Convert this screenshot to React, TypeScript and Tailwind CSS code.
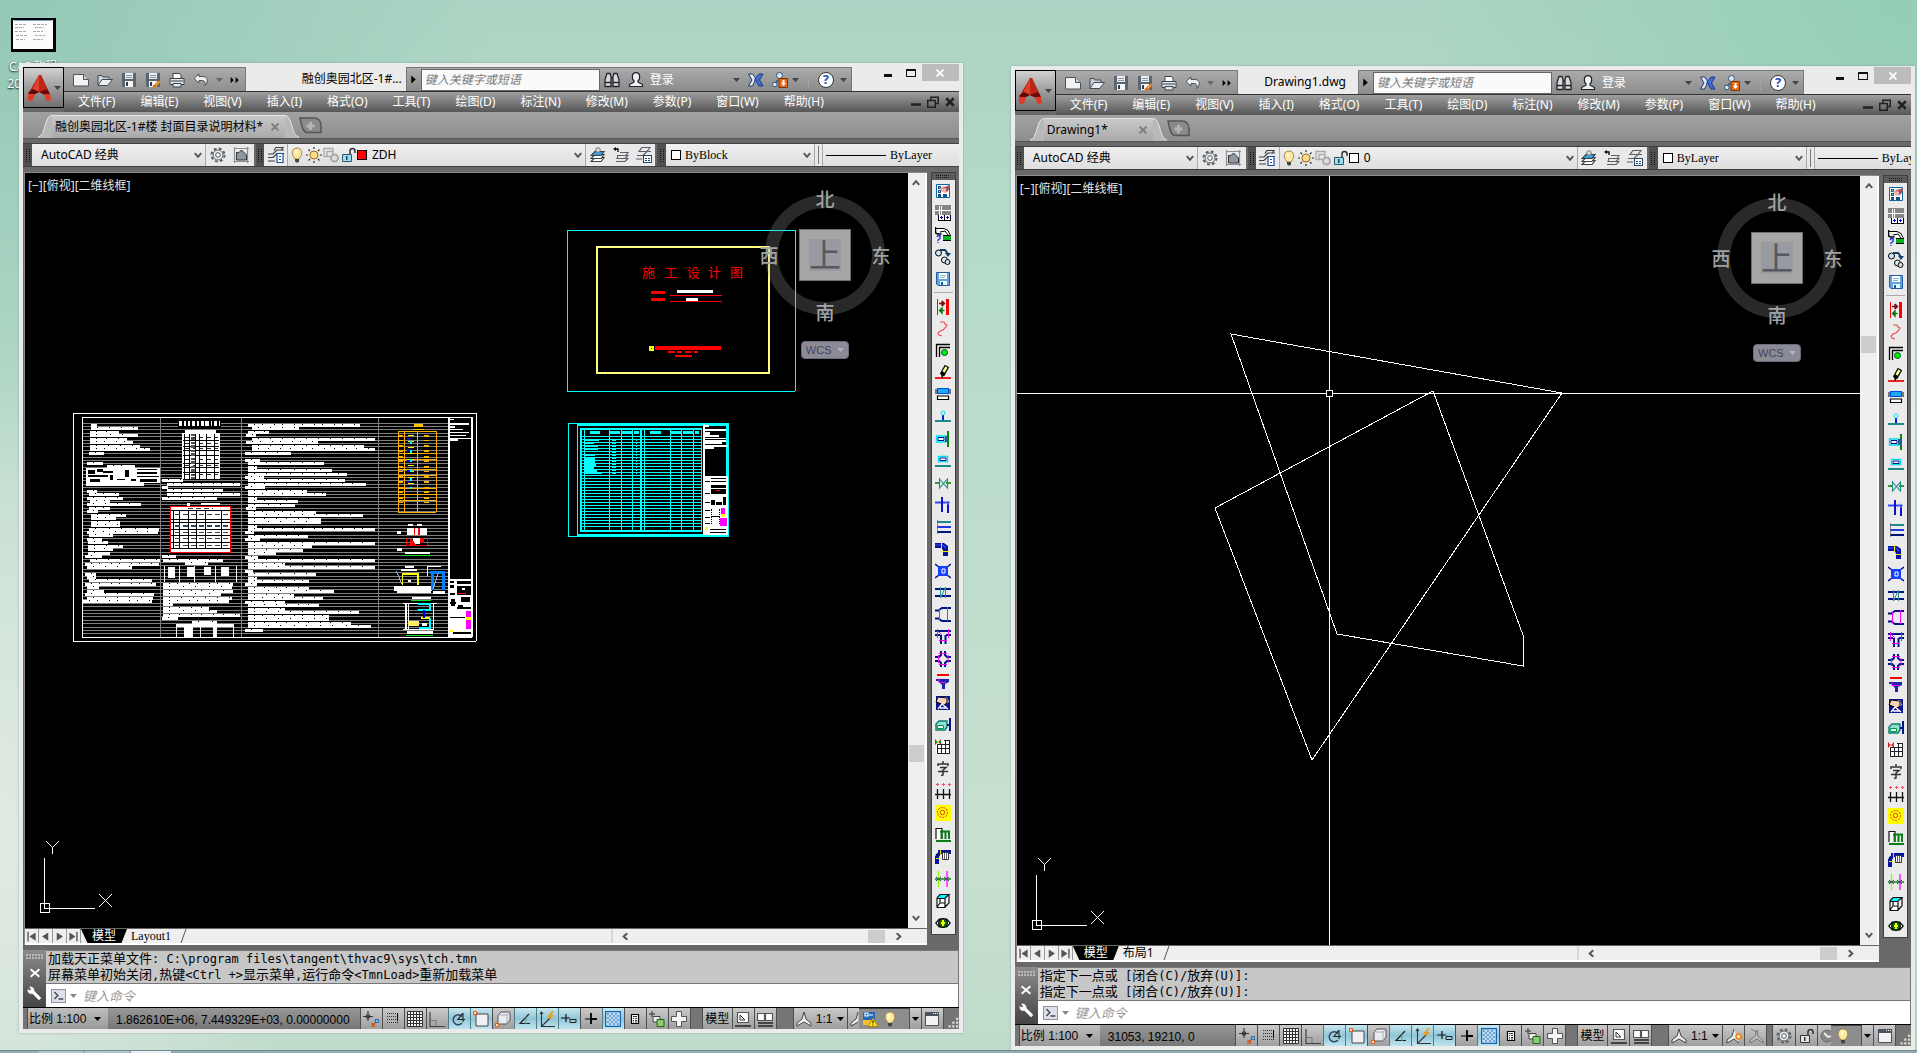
import React, { useState } from 'react';

const ui = "font-['Noto_Sans','Noto_Sans_CJK_SC',sans-serif]";
const song = "font-['Liberation_Serif','Noto_Sans_CJK_SC',serif]";
const plain = "font-['Liberation_Sans','Noto_Sans_CJK_SC',sans-serif]";

const menus = ['文件(F)', '编辑(E)', '视图(V)', '插入(I)', '格式(O)', '工具(T)', '绘图(D)', '标注(N)', '修改(M)', '参数(P)', '窗口(W)', '帮助(H)'];

// stroke / filled path shorthands for the pixel icons
const s = (d: string, c = '#000', w = 1, fill = 'none') => <path d={d} stroke={c} strokeWidth={w} fill={fill} />;
const f = (d: string, c = '#000') => <path d={d} fill={c} />;

const Ico: React.FC<{ size?: number; crisp?: boolean; children: React.ReactNode }> = ({ size = 16, crisp, children }) => (
  <svg width={size} height={size} viewBox="0 0 16 16" fill="none" className="shrink-0" shapeRendering={crisp ? 'crispEdges' : 'auto'} aria-hidden="true">
    {children}
  </svg>
);

const Down: React.FC<{ color?: string }> = ({ color = '#444' }) => (
  <svg width="7" height="4" viewBox="0 0 7 4" className="shrink-0" aria-hidden="true"><path d="M0 0h7L3.5 4z" fill={color} /></svg>
);

const Chevron = () => (
  <svg width="8" height="7" viewBox="0 0 8 7" className="pointer-events-none shrink-0" aria-hidden="true"><path d="M.8 1.2 4 4.8 7.2 1.2" stroke="#555" strokeWidth="2" fill="none" /></svg>
);

const Grip = () => (
  <svg width="4" height="13" viewBox="0 0 4 13" shapeRendering="crispEdges" aria-hidden="true"><path d="M.5 0v13M3.5 0v13" stroke="#111" strokeDasharray="1 1" /></svg>
);

const bulb = <>{s('M4.500 9.500C2.500 7.500 2.500 1 8 1s5.500 6.500 3.500 8.500L10 12H6z', '#a08850', 1, '#ffe9a0')}{f('M6 12h4v2.500L9 15.500H7L6 14z', '#444')}{f('M6 3h2v4H6z', '#fffbe0')}</>;
const gear = (
  <>
    <circle cx="8" cy="8" r="6.500" stroke="#5a6068" strokeWidth="2" strokeDasharray="2.800 2.300" />
    <circle cx="8" cy="8" r="5" stroke="#5a6068" fill="#eee" />
    <circle cx="8" cy="8" r="2.300" stroke="#4a5058" fill="#fff" />
  </>
);
const layers = (top: string) => (
  <>
    {s('M5 10.500h9l-3 4H1z', '#3b4046', 1.2, '#fff')}
    {s('M5 7.500h9l-3 4H1z', '#3b4046', 1.2, '#fff')}
    {s('M5 4.500h9l-3 4H1z', '#3b4046', 1.2, top)}
  </>
);
const lock = <>{s('M10 7V4a2.500 2.500 0 0 1 5 0v2', '#333', 1.5)}{s('M2.500 7.500h9v7h-9z', '#2b5968', 1, '#9bdcf0')}{f('M6 9h1.500v4H6z', '#174a5c')}</>;
const floppy = <>{f('M1 1h14v14H2L1 14z', '#5b6570')}{f('M4 1h8v6H4z', '#e9eef3')}{f('M5 3h6v1H5zM5 5h6v1H5z', '#8c96a0')}{f('M4 9h8v6H4z', '#f8f8f8')}{f('M5 10h2v4H5z', '#333d48')}</>;

const quick: { name: string; art: React.ReactNode }[] = [
  { name: '新建', art: <>{s('M.500 2.500h10l5 5v6.500H.500z', '#4b535d', 1, '#f2f3f5')}{s('M10.500 2.500v5h5', '#4b535d', 1, '#cfd4da')}</> },
  { name: '打开', art: <>{s('M1 13.500V3.500h4l1 1.500h6v3', '#414a55', 1, '#c9cfd6')}{s('M1 13.500 5 7.500h10.500l-5 6z', '#414a55', 1, '#eceff2')}</> },
  { name: '保存', art: floppy },
  { name: '另存为', art: <>{floppy}{s('M14.500 9.500 10 14l-2 1', '#d07818', 3)}{s('M14.500 9.500 11 13', '#ffc35a', 1)}</> },
  { name: '打印', art: <>{s('M4 6V1.500h6.500L12 3v3', '#3c434c', 1, '#fff')}{s('M1 6.500h14v6H1z', '#3c434c', 1, '#e3e5e8')}{f('M2 8h12v2H2z', '#8a929a')}{s('M4 11.500h8v3.500H4z', '#3c434c', 1, '#d8ecf0')}</> },
  { name: '放弃', art: s('M6 2 1 6.500 6 11V8.500h3.500c2 0 3 1.500 2.500 5 3.500-3.500 3-9-2-9H6z', '#4a525c', 1, '#f1f2f4') },
];

const railTop: React.ReactNode[] = [
  <>{s('M1.500 1.500h13v13h-13z', '#0a64a0', 1, '#fff')}{f('M3 3h3v3H3zM3 7h3v3H3zM3 11h3v3H3zM8 11h4v3H8z', '#14538a')}{f('M4 4h1v1H4zM4 8h1v1H4z', '#8ff')}{f('M5 6l3-3 4 1 2 3-3 3-4-1z', '#f3b0a0')}{f('M8 5l4-2 3-1v3l-3 4z', '#9b5660')}{f('M9 5l2 1-1 2z', '#fff')}</>,
  <>{f('M0 0h16v10H0z', '#858585')}{s('M4.500 1v9M6.500 1v9M0 5.500h16', '#fff')}{f('M3 10h13v6H3z', '#000')}{f('M4 10h5v5H4zM10 10h5v5h-5z', '#fff')}{s('M6.500 11v3M5 12.500h3M12.500 11v3M11 12.500h3', '#0000e0')}</>,
  <>{s('M0 1.500h9l4 2 2 4v3', '#000', 1, '#fff')}{s('M.500 0v6l2 1h4', '#000', 1.5)}{s('M5 5l5-1 3 4', '#000')}{f('M8 9h8v4H8z', '#08b020')}{s('M8 13.500h8M8 8.500h8', '#000')}{s('M2 10l1-1.500h2v3l-2 1.500v1M3 15v1', '#2430e0', 1.4)}</>,
  <>{s('M5 1h5l3 4', '#104070', 2)}{f('M10 4h6l-3 4z', '#104070')}<circle cx="3.500" cy="4" r="3" fill="#cfe6f5" stroke="#000" /><circle cx="9.500" cy="11" r="3" fill="#e4eef4" stroke="#000" /><circle cx="12.500" cy="13" r="2.500" fill="#cfe0ea" stroke="#000" /></>,
  <>{s('M1.500 1.500h13v13H3l-1.500-1.500z', '#235a9a', 1, '#62a3df')}{f('M4 2h8v6H4z', '#fff')}{f('M5 4h6v1H5zM5 6h5v1H5z', '#7bb')}{f('M5 10h7v4H5z', '#dff')}{f('M6 11h2v3H6z', '#235a9a')}</>,
];

const rail: React.ReactNode[] = [
  <>{f('M2 0h1v16H2zM11 0h3v16h-3z', '#f00')}{s('M4 4.500h5M7 2v5M7 2l2.500 2.500L7 7', '#7c1015', 1.4)}{s('M9.500 11.500H5M7 9v5l-2.500-2.500z', '#0a7a14', 1.4)}</>,
  <>{s('M5 1h4l1 2 2 1-1 2-3 3-3 1-2 2 1 2 3 1', '#f34747', 1.1)}</>,
  <>{s('M1.500 14V1.500H15', '#000', 1.3)}{s('M4.500 14V4.500H15', '#000', 1.3)}<circle cx="9.500" cy="9.500" r="3" fill="#0e0" stroke="#053" /></>,
  <>{f('M0 12h16v2H0z', '#f02020')}{s('M12 1 7 10', '#000', 5)}{s('M11.500 2 8.500 7', '#ffff90', 2.5)}{f('M6 9h3l-2 5z')}</>,
  <>{f('M0 2h16v5H0z', '#777')}{f('M2 1h12v6H2z', '#0050e0')}{f('M3 2h10v4H3z', '#20a8ff')}{s('M2.500 9v3.500h11V9z', '#000', 1.2, '#fff')}</>,
  <>{f('M0 11h16v2H0z', '#208a8a')}{f('M7 6h2v5H7z', '#0028d0')}<circle cx="8" cy="4" r="2" stroke="#0de" fill="#dff" /></>,
  <>{f('M12 0h2v16h-2z', '#088408')}{s('M1.500 5h9v6h-9z', '#00dcf0', 1.4, '#fff')}{s('M3 6.500h6v3H3z', '#00108c')}{f('M10 5h3v6h-3z', '#1c60a0')}</>,
  <>{f('M0 12h16v2H0z', '#208a8a')}{s('M3.500 3.500h9v5h-9z', '#00dcf0', 1.4, '#fff')}{s('M5 5h6v2.500H5z', '#00108c')}</>,
  <>{f('M0 7h5v2H0zM11 7h5v2h-5z', '#2f9a2f')}{s('M4.500 3v10l8-9v9l-8-9', '#1f8d8d', 1.1)}</>,
  <>{s('M0 5.500h14', '#3048ff', 2)}{s('M7 0v15M13 5v11', '#1010c8', 2)}<circle cx="13" cy="5.500" r="1.500" stroke="#889cff" /></>,
  <>{f('M2 2h14v2H2z', '#208a8a')}{f('M2 7h14v2H2z', '#2038e8')}{f('M2 12h14v2H2z', '#00107c')}{s('M2.500 1v14', '#667', 0.8)}</>,
  <>{f('M0 2h9l4 3v10H8V9L6 7H0z', '#0a10a0')}{s('M0 4h8l3 3', '#2a58ff', 1.2)}{f('M6 1h1v7H6zM7 10h7v1H7z', '#ee0')}</>,
  <>{s('M0 1l4 3M16 1l-4 3M0 15l4-3M16 15l-4-3', '#001488', 1.5)}{f('M3 3h10v10H3z', '#1540ff')}{s('M7 6h3v4H7z', '#fff', 1)}</>,
  <>{f('M0 3h16v2H0zM0 10h16v2H0z', '#001488')}{s('M5.500 2v11l5-11v11', '#1f9090', 1)}</>,
  <>{s('M0 3.500h4M0 11.500h4', '#001488', 2)}{s('M4 3 7 1h9M4 12l3 2h9', '#001488', 2)}{s('M4.500 2v11M12.500 0v14', '#f0f', 1)}</>,
  <>{f('M0 1h16v2H0zM0 5h5v2H0zM11 5h5v2h-5z', '#001488')}{s('M6 6v9M10.500 6v9', '#001488', 2)}{s('M2.500 0v9M13.500 0v9M4 11.500h8M4 3l3 3', '#f0f', 1)}</>,
  <>{s('M6 0v4L4 6H0M10 0v4l2 2h4M6 16v-4L4 10H0M10 16v-4l2-2h4', '#001488', 2)}{s('M4 2.500h8M4 13.500h8M3.500 4v8M13 4v8', '#f0f', 1)}</>,
  <>{f('M2 1h12v2H2z', '#f00')}{f('M1 6h13v3l-4 2v5H7v-4L3 8H1z', '#1c25a8')}{s('M4 5.500v4h7', '#f0f', 1)}</>,
  <>{f('M1 1h14v14H1z', '#0a1590')}{f('M2 2h10l2 5-5 3-7-3z', '#f2d2b8')}{s('M1 7l8 3 3-2V3L3 2z', '#000', 1)}{s('M3 14l4-5 6 5M5 13h7', '#fff', 1.3)}</>,
  <>{s('M1 7l3-3h8v6l-2 3H1z', '#117c70', 1.4, '#8de0d0')}{s('M2.500 8.500h6v3h-6z', '#094', 1, '#fff')}{s('M12 8h3M15 1v13', '#001488', 2)}</>,
  <>{f('M1 1h14v14H1z', '#fff')}{s('M2 5.500h13M2 9.500h13M2 14.500h13M2.500 5v10M6.500 5v10M10.500 1v14M14.500 1v14M9 1.500h6', '#222', 1)}{f('M0 0l3 3 3-3v6L3 3 0 6z', '#d02020')}{f('M1 2h1v2H1zM5 2h1v2H5z', '#0c0')}</>,
  <>{s('M8 0v3M3 5V3h10v2M5 6.500h6L8 9v5l-2 .500M3 10.500h10', '#333', 1.5)}</>,
  <>{s('M0 11.500h16M2.500 6v10M8.500 6v10M14.500 6v10', '#111', 1.3)}{s('M1 1.500h3M7 1.500h3M13 1.500h3M2.500 0v3M8.500 0v3M14.500 0v3', '#f45', 1)}</>,
  <>{f('M0 0h16v16H0z', '#ff0')}<circle cx="7.500" cy="7.500" r="5" stroke="#f03010" strokeDasharray="2 1" /><circle cx="7.500" cy="7.500" r="2.200" stroke="#f03010" /></>,
  <>{s('M1 12V1.500h6V12', '#111', 1.2, '#fff')}{s('M1 14h15M5 4.500h10M6.500 4v8M10.500 4v8M14 4v8', '#0a7c18', 2)}</>,
  <>{f('M0 9h3l3-4h8V2H6L1 5z', '#001488')}{f('M0 7h4v8H0zM3 1h13v4H3z', '#0a12a0')}{s('M7.500 3.500h6v7h-6z', '#333', 1, '#fff')}{s('M9.500 4v6M11.500 4v6', '#666', 1)}{f('M1 9h4v1H1zM5 1h1v5H5z', '#dd0')}</>,
  <>{s('M0 8h16', '#4c9a50', 2)}{s('M3.500 0v16', '#8f0', 1.3)}{s('M12 0v16', '#f0f', 1.3)}{s('M1 6l5 4M1 10l5-4M9 6l5 4M9 10l5-4', '#346', 1)}</>,
  <>{f('M2 5h9v10H2z', '#fff')}{f('M5 2h8l-3 3H3z', '#0ff')}{s('M2 5.500h8v9H2zM2 5l3-3.500h9L10 5M14 2v8l-4 4M2 14l3-4h5M5 10V6', '#111', 1.2)}</>,
  <>{f('M0 8 4 3.500h8L16 8l-4 4.500H4z')}{f('M1.500 8 4 5.500v5zM14.500 8 12 5.500v5z', '#fff')}<circle cx="8" cy="8" r="4.500" fill="#0a6a14" stroke="#000" />{f('M7 5h2v6H7zM6 7h4v2H6z', '#ff0')}</>,
];

interface Toggle { name: string; on?: boolean; art: React.ReactNode }

const toggles: Toggle[] = [
  { name: '推断约束', art: <>{s('M0 5.500h10M5 0v10', '#333', 1.1)}{s('M3.500 4h3v3h-3z', '#333', 1)}{s('M12.500 8.500h3v3h-3zM12 12l-2 2', '#2f72b8', 1.2)}{s('M9 12.500h2.500v3H9z', '#d25c20', 1.2)}</> },
  { name: '捕捉', art: <>{s('M2 2.500h9M2 5.500h9M2 8.500h9M2 11.500h9', '#333', 1)}{s('M3.500 2v11M5.500 2v11M7.500 2v11M9.500 2v11', '#b4b4b4', 1)}{f('M12 2h1v8h-1zM12 11h1v1h-1z')}</> },
  { name: '栅格', art: <>{f('M1 1h15v15H1z', '#f4f4f4')}{s('M.500 .500h15v15H.500zM3.500 0v16M6.500 0v16M9.500 0v16M12.500 0v16M0 3.500h16M0 6.500h16M0 9.500h16M0 12.500h16', '#333', 1)}</> },
  { name: '正交', art: <>{s('M1 1v14.500h15', '#444', 1.2)}{s('M1 9.500h6V15', '#777', 1)}</> },
  { name: '极轴', on: true, art: <>{s('M11 5.500A5 5 0 1 0 11 12', '#346', 1.4)}{s('M12 2 7 8.500h7M12 2v9', '#222', 1.1)}</> },
  { name: '对象捕捉', on: true, art: <>{s('M3 3h12v12H3z', '#444', 1, '#eef0f4')}<circle cx="2" cy="2" r="1.700" stroke="#e85a18" strokeWidth="1.200" fill="#fff" /></> },
  { name: '三维捕捉', art: <>{s('M3 4 6 1h9v8l-3 4H3z', '#555', 1, '#e8ebf0')}{s('M3 4h9v9M12 4l3-3', '#aab', 1)}<circle cx="2" cy="14" r="1.700" stroke="#e85a18" strokeWidth="1.200" fill="#fff" /></> },
  { name: '对象追踪', on: true, art: <>{s('M12 3 3 12.500h10', '#222', 1.2)}{s('M9 6v7', '#699', 1)}</> },
  { name: '动态坐标', on: true, art: <>{s('M2.500 1v14.500H16M1 3l1.500-2L4 3M3 15 11 7', '#333', 1.1)}{f('M13 0 8 6h3l-1 4 5-6h-3l3-4z', '#f49a18')}</> },
  { name: '动态输入', on: true, art: <>{s('M0 7h9M5 3v8', '#111', 1.2)}{s('M9 8.500h6v3H9z', '#222', 1)}</> },
  { name: '线宽', art: <>{s('M2 8h12', '#000', 1)}{s('M8 2v11M8 8h6', '#000', 1.8)}</> },
  {
    name: '透明度',
    on: true,
    art: (
      <>
        {s('M.500 .500h15v15H.500z', '#1463b8', 1.4, '#c4dcf0')}
        <path d="M2 3h12M2 7h12M2 11h12" stroke="#6fa5d4" strokeWidth="2" strokeDasharray="2 2" />
        <path d="M4 5h10M4 9h10M4 13h10" stroke="#6fa5d4" strokeWidth="2" strokeDasharray="2 2" />
      </>
    ),
  },
  { name: '快捷特性', art: <>{s('M4.500 3.500h7v9h-7z', '#000', 1.2, '#fff')}{s('M6 5.500h4M6 7.500h1M8 7.500h2M6 9.500h1M8 9.500h2M6 11h1M8 11h2', '#000', 0.8)}</> },
  { name: '选择循环', art: <>{s('M0 3h6M3 0v6', '#333', 1)}{s('M4 5.500h7V11H4z', '#444', 1, '#eee')}{s('M8 8.500h7v7H8z', '#226618', 1, '#8ccc70')}</> },
  { name: '注释监视器', art: s('M5.500 .500h5v5h5v5h-5v5h-5v-5h-5v-5h5z', '#555', 1, '#f2f4f6') },
];

const statusTone = 'border-l border-[#4f4f4f] bg-linear-to-b from-[#c9c9c9] to-[#9f9f9f]';
const activeTone = 'border-l border-[#4f7c88] bg-linear-to-b from-[#c9e8ef] via-[#8fc6d8] to-[#bfe5ee]';

// Full notes sheet: bars of body copy as [x, y, width]
const notesA = [
  [93, 72, 19], [93, 82, 142], [90, 93, 88], [90, 103, 143], [90, 113, 110], [90, 124, 128], [90, 134, 150], [90, 144, 180], [87, 155, 45],
  [80, 186, 48], [140, 196, 85], [80, 270, 32], [87, 280, 90], [80, 290, 108], [90, 300, 60], [80, 310, 163], [87, 320, 63], [80, 330, 34],
  [93, 342, 105], [93, 352, 75], [93, 362, 87], [93, 372, 87], [87, 383, 209], [80, 393, 213], [87, 403, 73], [80, 414, 45], [85, 424, 58],
  [85, 434, 103], [85, 445, 75], [85, 455, 65], [75, 465, 50], [90, 478, 210], [75, 488, 223], [80, 498, 135], [75, 519, 33], [80, 529, 28],
  [87, 538, 188], [75, 548, 212], [80, 559, 38], [80, 569, 52], [75, 579, 208], [80, 590, 200], [70, 600, 205],
];
const notesB = [
  [306, 238, 62], [320, 248, 220], [306, 258, 19], [320, 268, 168], [320, 280, 220], [306, 290, 164], [306, 465, 42], [308, 476, 182],
  [375, 487, 70], [308, 548, 211], [308, 559, 207], [308, 569, 211], [308, 579, 176], [308, 590, 209], [308, 600, 199], [308, 610, 32],
  [308, 621, 140], [308, 631, 162], [308, 641, 232], [306, 652, 49], [395, 663, 75],
];
const notesC = [
  [563, 900], [575, 718], [563, 626], [557, 588], [575, 945], [557, 773], [575, 912], [575, 945], [555, 692], [0, 0],
  [555, 600], [563, 792], [563, 592], [563, 815], [563, 860], [555, 612], [563, 855], [563, 918], [555, 616], [563, 740],
  [563, 798], [563, 590], [563, 714], [563, 706], [557, 588], [563, 768], [563, 908], [563, 782], [563, 782], [563, 590],
  [563, 945], [555, 582], [563, 744], [555, 600], [563, 945], [563, 755], [563, 730], [563, 648], [555, 594], [563, 945],
  [563, 674], [563, 945], [555, 580], [563, 767], [563, 590], [563, 747], [555, 590], [563, 747], [563, 822], [563, 703],
  [563, 790], [555, 675], [563, 776], [563, 676], [563, 897], [563, 808], [563, 808], [563, 873], [563, 933], [555, 608],
];

const bar = (x: number, y: number, w: number, key: string) => (
  <g key={key}>
    <rect x={x} y={y} width={w} height="9" fill="#fff" />
    <path d={`M${x + 18} ${y + 1.5}h${Math.max(w - 24, 0)}`} stroke="#000" strokeWidth="3" strokeDasharray={`3 ${21 + (y % 4) * 6} 3 33`} />
  </g>
);

const NotesSheet = () => (
  <g transform="translate(35 227) scale(0.33333)">
    {Array.from({ length: 63 }, (_, i) => (
      <path key={i} d={`M68 ${Math.round(70 + i * 10.2)}h1097`} stroke="#808080" strokeWidth="3" />
    ))}
    <path d="M301 52v660M544 52v660M955 52v660" stroke="#808080" strokeWidth="3" />
    <path d="M40.500 40.500h1209v684H40.500z" stroke="#fff" strokeWidth="3" fill="none" />
    {notesA.map(([x, y, w]) => bar(x, y, w, `a${y}`))}
    {notesB.map(([x, y, w]) => bar(x, y, w, `b${y}`))}
    {notesC.map(([a, b], i) => (b ? bar(a, Math.round(72 + i * 10.4), b - a, `c${i}`) : null))}
    <path d="M78 205h222v44h-48v9H78z" fill="#fff" />
    <path d="M84 210h20v12H84zM112 207h16v9h-16zM130 214h28v6h-28zM84 226h60v6H84zM90 236h30v9H90zM150 226h8v15h-8zM196 210h12v21h-12zM232 207h60v3h-60zM232 216h60v5h-60zM170 236h26v4h-26zM232 228h64v3h-64zM214 236h14v8h-14zM240 237h50v8h-50z" fill="#000" />
    <path d="M354 60h128v22H354z" fill="#000" />
    <path d="M356 71h124" stroke="#fff" strokeWidth="15" strokeDasharray="10 6 5 6 8 5" />
    <path d="M375 90h93v9h12v138H366V99h9z" fill="#fff" />
    <path d="M373 102v134M390 102v134M406 102v134M420 102v134M441 102v134M463 102v134M369 123h108M369 141h108M369 153h108M369 168h108M369 192h108M369 204h108M369 219h108" stroke="#000" strokeWidth="3" />
    <path d="M399 102v134" stroke="#555" strokeWidth="10" strokeDasharray="6 4 9 5" />
    <path d="M376 132h98M376 147h98M376 180h98M376 198h98M376 225h98M376 112h98" stroke="#322" strokeWidth="3" strokeDasharray="10 12" />
    <path d="M381 309h9v9h-9zM424 309h56v6h-56z" fill="#fff" />
    <path d="M332 319h180v139H332z" fill="#fff" stroke="#f00" strokeWidth="3" />
    <path d="M340 331v117M358 331v117M385 331v117M409 331v117M436 331v117M484 331v117M333 331h177M333 358h177M333 367h177M333 388h177M333 406h177M333 427h177M333 447h177" stroke="#000" strokeWidth="3" fill="none" />
    <path d="M385 325h75M345 343h160M345 378h160M345 397h160M345 416h160M345 436h160" stroke="#345" strokeWidth="4" strokeDasharray="14 10" />
    <path d="M313 498v47M358 498v47M405 498v47M466 498v47M529 498v47M350 672v40M421 672v40M520 672v40" stroke="#fff" strokeWidth="3" />
    <path d="M324 500h21v33h-21zM381 500h22v32h-22zM432 500h20v24h-20zM484 500h24v27h-24zM350 673h170v8H350zM372 681h27v31h-27zM460 681h10v31h-10z" fill="#fff" />
    <path d="M67.500 52.500h1170v660H67.500z" stroke="#fff" strokeWidth="3" fill="none" />
    <path d="M1165 52h6v660h-6zM1234 52h5v660h-5z" fill="#fff" />
    <path d="M1171 57h10v4h-10zM1171 69h56v5h-56zM1171 78h14v5h-14zM1171 87h38v4h-38zM1171 95h56v3h-56zM1171 105h48v4h-48zM1171 114h64v3h-64zM1171 117h23v6h-23z" fill="#fff" />
    <path d="M1062 71h27v10h-27zM1058 86h34v5h-34z" fill="#ffc000" />
    <path d="M1015.500 94.500h114v243h-114zM1034 94v243M1073 94v243M1015 160h114M1015 178h114M1015 210h114M1015 228h114M1015 265h114M1015 283h114M1015 301h114" stroke="#ffb000" strokeWidth="3" fill="none" />
    <path d="M1099 105v215M1022 105v215" stroke="#ffb000" strokeWidth="14" strokeDasharray="6 8 5 12" />
    <path d="M1052 105v160" stroke="#ff0" strokeWidth="18" strokeDasharray="4 14" />
    <path d="M1052 122v145" stroke="#0ff" strokeWidth="6" strokeDasharray="9 19" />
    <path d="M1047 115v150" stroke="#00f" strokeWidth="9" strokeDasharray="6 26" />
    <path d="M1044 372h14v6h-14zM1071 372h16v6h-16zM1040 384h60v22h-60zM1010 393h14v9h-14zM1010 444h16v9h-16zM1034 457h76v6h-76zM1060 415h20v18h-20z" fill="#fff" />
    <path d="M1062 384h4v20h-4zM1074 384h6v20h-6zM1038 414h4v22h-4zM1052 414l18 22h-22zM1080 414h12v16h-12zM1100 414h3v22h-3zM1038 435h64v3h-64z" fill="#f00" />
    <path d="M1032 466h81M1053 601h60M1038 706h81" stroke="#10e020" strokeWidth="3" />
    <path d="M1034 498h28v6h-28zM1024 507h46v6h-46zM1002 558h115v14h-115zM1012 573h100v5h-100zM1055 591h58v6h-58zM1118 573h36v9h-36zM1044 540h9v6h-9zM1102 498h3v30h-3zM1102 498h40v3h-40z" fill="#fff" />
    <path d="M1028 556v-33h46v33M1083 655h26" stroke="#ff0" strokeWidth="5" fill="none" />
    <path d="M1110 517h46M1150 517v54M1118 520v50" stroke="#0080ff" strokeWidth="8" fill="none" />
    <path d="M1008 512l18 40M1135 520l-16 46" stroke="#8ab8ff" strokeWidth="3" />
    <path d="M1030 609h100v4h-100zM1035 613h5v73h-5zM1045 613h3v73h-3zM1120 613h3v73h-3zM1040 694h78v9h-78zM1030 686h92v4h-92zM1085 670h16v9h-16z" fill="#fff" />
    <path d="M1075 612h36v19h-36M1111 655v30h-34" stroke="#0ff" strokeWidth="6" fill="none" />
    <path d="M1092 630v25" stroke="#00f" strokeWidth="4" />
    <path d="M1045 662h33v15h-33z" fill="#fe6" />
    <path d="M1171 537h63v175h-63z" fill="#fff" />
    <path d="M1190 543h44v10h-44zM1192 557h42v28h-42zM1171 543h12v5h-12zM1171 555h12v9h-12zM1171 580h14v6h-14zM1204 592h26v14h-26zM1174 598h12v20h-12zM1171 606h16v6h-16zM1194 614h14v10h-14zM1190 622h44v5h-44zM1171 652h45v3h-45zM1180 696h54v6h-54z" fill="#000" />
    <path d="M1206 564h9v6h-9z" fill="#fff" />
    <path d="M1194 580h25" stroke="#f00" strokeWidth="3" />
    <path d="M1218 633h15v18h-15zM1218 661h15v27h-15z" fill="#f0f" />
    <path d="M1218 652h15v8h-15zM1170 689h9v7h-9z" fill="#ff0" />
  </g>
);

const CoverSheet = () => (
  <g transform="translate(525 7) scale(0.33333)">
    <path d="M52.500 151.500h684v483h-684z" stroke="#0ff" strokeWidth="3" fill="none" />
    <path d="M141 201h516v378H141z" stroke="#ffff80" strokeWidth="6" fill="none" />
    <text x="276 343 410 473 540" y="291" fontSize="39" fill="#f00" fontFamily="'Noto Sans CJK SC', sans-serif">施工设计图</text>
    <path d="M303 333h42v9h-42zM303 354h42v9h-42zM360 345h156v3H360zM360 363h156v3H360zM315 498h198v12H315zM354 513h21v6h-21zM381 513h15v6h-15zM405 513h18v6h-18zM432 513h12v6h-12zM375 525h51v6h-51z" fill="#f00" />
    <path d="M381 330h108v9H381zM408 354h36v9h-36z" fill="#fff" />
    <path d="M297 498h15v15h-15z" fill="#ff0" />
    <path d="M303 504h4v4h-4z" fill="#f00" />
  </g>
);

const ListSheet = () => (
  <g transform="translate(525 7) scale(0.33333)">
    <path d="M55.500 730.500h480v339h-480zM82.500 730v339" stroke="#0ff" strokeWidth="3" fill="none" />
    <path d="M84 732h453v6H84zM84 1062h453v8H84zM528 732h9v336h-9zM90 744h366v6H90zM90 1050h366v6H90zM90 744h6v310h-6zM269 744h7v310h-7z" fill="#0ff" />
    <path d="M103 750v300M178 750v300M214 750v300M247 750v300M284 750v300M361 750v300M394 750v300M430 750v300M455 744v310" stroke="#0ff" strokeWidth="3" />
    {Array.from({ length: 31 }, (_, i) => (
      <path key={i} d={`M96 ${770 + i * 9}h360`} stroke="#0ff" strokeWidth="3" />
    ))}
    <path d="M120 753h30v9h-30zM180 753h30v9h-30zM217 753h29v9h-29zM252 753h15v9h-15zM300 753h33v9h-33zM363 753h30v9h-30zM399 753h30v9h-30zM435 753h12v9h-12zM102 778h45v5h-45zM102 787h30v5h-30zM102 796h42v5h-42zM102 805h42v5h-42zM102 823h33v5h-33zM102 832h33v18h-33zM102 850h36v9h-36zM102 859h30v9h-30zM102 868h39v9h-39zM102 877h54v6h-54z" fill="#0ff" />
    <path d="M192 778v105" stroke="#0ff" strokeWidth="12" strokeDasharray="5 4" />
    <path d="M260 778v105" stroke="#0ff" strokeWidth="3" strokeDasharray="5 4" />
    <path d="M459 732h6v333h-6zM465 735h12v6h-12zM465 747h63v5h-63zM465 756h16v9h-16zM465 765h42v6h-42zM465 774h63v3h-63zM465 780h63v5h-63zM465 786h51v6h-51zM465 795h69v6h-69zM465 801h27v6h-27zM465 888h69v177h-69z" fill="#fff" />
    <path d="M483 894h45v3h-45zM483 903h45v3h-45zM483 916h45v8h-45zM483 927h45v15h-45zM483 960h12v14h-12zM498 966h18v9h-18zM519 950h9v24h-9zM465 903h15v3h-15zM465 939h15v3h-15zM465 966h15v3h-15zM465 990h14v3h-14zM465 1011h14v3h-14zM465 1029h14v3h-14zM480 1047h48v3h-48zM480 1056h48v3h-48z" fill="#000" />
    <path d="M484 988v44M508 988v44" stroke="#000" strokeWidth="3" strokeDasharray="4 3" />
    <path d="M484 1010h24" stroke="#000" strokeWidth="3" />
    <path d="M498 930h12v3h-12z" fill="#f00" />
    <path d="M513 984h12v18h-12zM510 1014h21v24h-21z" fill="#f0f" />
    <path d="M513 1002h12v9h-12zM465 1041h9v8h-9z" fill="#ff0" />
  </g>
);

const PolyDrawing = () => (
  <g stroke="#fff" fill="none">
    <path d="M214 158 545 217 295 584 198 332 416 215 506 459V490L320 458Z" />
    <path d="M312.500 0V2000M0 217.500H3000" />
    <path d="M309.500 214.500h6v6h-6z" fill="#000" />
  </g>
);

const ViewCube = () => (
  <div className="absolute top-3.5 right-4 flex w-[134px] flex-col items-center">
    <svg width="134" height="140" viewBox="-4 -6 134 140" className="overflow-visible" aria-label="ViewCube">
      <circle cx="63" cy="62" r="53.500" fill="none" stroke="#a0a0a0" strokeOpacity="0.260" strokeWidth="13" />
      <rect x="37.500" y="36.500" width="51" height="51" fill="#a6a6a6" stroke="#6f6f6f" />
      <rect x="47" y="46" width="32" height="32" fill="#989a9f" />
      <g fontFamily="'Noto Sans CJK SC', sans-serif" fontSize="19" fontWeight="500" textAnchor="middle" fill="#a2a2a2">
        <text x="63" y="14">北</text>
        <text x="63" y="127">南</text>
        <text x="7" y="70">西</text>
        <text x="119" y="70">东</text>
        <text x="63" y="74" fontSize="32" fontWeight="400" fill="#55595f">上</text>
      </g>
    </svg>
    <button className="mt-3.5 flex h-[18px] w-12 items-center justify-between rounded-[4px] border border-[#6c6c7a] bg-[#8b8b98] px-1 text-[11px] text-[#454552] font-['Liberation_Sans',sans-serif]">
      WCS <Down color="#b2b2bd" />
    </button>
  </div>
);

const UcsIcon = () => (
  <svg width="100" height="96" viewBox="0 0 100 96" className="absolute bottom-0 left-0" stroke="#fff" fill="none" aria-hidden="true">
    <path d="M19.500 26v50H70M15.500 71.500h9v9h-9z" shapeRendering="crispEdges" />
    <path d="M21 9l6.500 6.500L34 9M27.500 15.500V22M74 62l13 13M87 62 74 75" />
  </svg>
);

const CommandText: React.FC<{ line: string }> = ({ line }) => (
  <p>
    {line.split(/([\x20-\x7e]+)/).map((part, i) => (
      <span key={i} className={i % 2 ? "text-[12px] font-['DejaVu_Sans_Mono',monospace]" : ''}>{part}</span>
    ))}
  </p>
);

interface CadProps {
  className: string;
  title: string;
  titlePad: string;
  tab: string;
  layer: string;
  layerFill: string;
  color: string;
  layout: string;
  history: string[];
  coords: string;
  thumb: string;
  tray: 'short' | 'long';
  children: React.ReactNode;
}

const CadWindow: React.FC<CadProps> = (p) => {
  const [command, setCommand] = useState('');
  const [modes, setModes] = useState(toggles.map((t) => !!t.on));

  return (
    <section aria-label={p.title} className={`relative flex min-w-0 flex-col overflow-hidden bg-[#ebebeb] p-1 shadow-[0_0_2px_rgba(90,120,110,0.5)] ${ui} ${p.className}`}>
      <div className="flex min-h-0 flex-1 flex-col bg-[#696969]">
        <header className="flex h-[45px] shrink-0">
          <button aria-label="应用程序菜单" className="flex h-[41px] w-[41px] shrink-0 items-center justify-center gap-0.5 border border-black bg-linear-to-b from-[#d0d0d0] to-[#707070]">
            <svg width="25" height="28" viewBox="0 0 25 28" aria-hidden="true">
              <path d="M12 1 1 20l5 1 6-3 6 3 5-1L14 1z" fill="#b01c12" />
              <path d="M12 1 5 16l7 2 8-3z" fill="#e0402a" />
              <path d="M12 1v17l8-3L14 1z" fill="#bc2618" />
              <path d="M1 19l5-4 6 3-6 3z" fill="#5a0a08" />
              <path d="M12 18l8-3 3 5-5 1z" fill="#6b0c0a" />
              <path d="M1 20h7l-2 6c-3 2-6 1-5-2zM17 20h6l1 5c-1 3-4 2-5 1z" fill="#e03a26" />
            </svg>
            <Down color="#3c4652" />
          </button>
          <div className="flex min-w-0 flex-1 flex-col">
            <div className="flex h-6 shrink-0 bg-[#ebebeb]">
              <div className="flex w-[182px] shrink-0 items-center border-t border-r border-[#777] bg-linear-to-b from-[#ababab] to-[#8f8f8f] pl-[5px]">
                {quick.map((q) => (
                  <button key={q.name} aria-label={q.name} className="flex w-6 justify-center"><Ico>{q.art}</Ico></button>
                ))}
                <button aria-label="放弃列表" className="flex w-3 justify-center"><Down color="#666" /></button>
                <button aria-label="更多" className="flex w-5 justify-center"><Ico size={10}>{f('M1 3l5 5-5 5zM9 3l5 5-5 5z')}</Ico></button>
              </div>
              <h1 className={`flex min-w-0 flex-1 items-center justify-end text-[12px] whitespace-nowrap text-black ${p.titlePad}`}>{p.title}</h1>
              <div className="flex shrink-0 items-center border border-b-0 border-[#777] bg-linear-to-b from-[#ababab] to-[#8b8b8b]">
                <button aria-label="收起搜索" className="flex w-3.5 justify-center"><Ico size={9}>{f('M4 1l8 7-8 7z')}</Ico></button>
                <input aria-label="搜索" placeholder="键入关键字或短语" className="h-[22px] w-[179px] border border-[#666] bg-[#fafafa] px-[3px] text-[12px] italic outline-none placeholder:text-[#777]" />
                <button aria-label="查找" className="flex w-6 justify-center">
                  <Ico>{s('M3 1.500h3l1 3v10H1v-7zM10 1.500h3l2 6v7H9v-10z', '#22262c', 1.3, '#d8dade')}{s('M1 10.500h6M9 10.500h6M7 6h2', '#22262c', 1.3)}</Ico>
                </button>
                <button className="flex items-center gap-0.5 text-[12px] text-white">
                  <span className="flex w-6 justify-center"><Ico>{s('M8 .700c5 0 4 7 2 8v1.500l4.500 2.300v2H1.500v-2L6 10.200V8.700c-2-1-3-8 2-8z', '#1d2228', 1.2, '#edf0f3')}</Ico></span>
                  登录
                </button>
                <button aria-label="登录选项" className="flex w-[70px] items-center justify-end pr-1"><Down /></button>
                <button aria-label="Exchange" className="flex w-6 items-center justify-center"><Ico>{s('M.500 2h4l3 4-1 4-2 4h-4L4 8z', '#1c3470', 1, '#e4eaf8')}{s('M15 2h-4L7 7l4 7h4l-3.500-6z', '#1c3a8c', 1, '#3f6fd0')}</Ico></button>
                <button aria-label="Autodesk 360" className="flex w-[34px] items-center gap-1 pl-1"><Ico>{s('M2 13 6 8M7 6l3 4', '#33507a', 1.5)}<circle cx="7.500" cy="3.500" r="3" fill="#dce6f2" stroke="#33507a" /><circle cx="2.800" cy="12.500" r="2.300" fill="#dce6f2" stroke="#33507a" />{s('M7 6.500h8.500v9H7z', '#7a3608', 1, '#e86c10')}{f('M10.500 8h2v3H14l-2.500 3L9 11h1.500z', '#fff')}</Ico><Down /></button>
                <span className="ml-1.5 h-4 w-px bg-[#a2a2a2]" />
                <button aria-label="帮助" className="flex w-[42px] items-center justify-end gap-1.5 pr-1">
                  <span className="flex h-4 w-4 items-center justify-center rounded-full border border-[#333] bg-white text-[13px] leading-none font-bold text-[#1c50c0]">?</span>
                  <Down />
                </button>
              </div>
              <div className="-mt-1 flex h-[18px] w-[107px] shrink-0 items-stretch pt-px pl-6">
                <button aria-label="最小化" className="flex w-6 items-end justify-center pb-1"><span className="h-[3px] w-2 bg-[#111]" /></button>
                <button aria-label="最大化" className="flex w-[22px] items-end justify-center pb-1"><span className="h-2 w-2.5 border border-t-2 border-[#111]" /></button>
                <button aria-label="关闭" className="flex flex-1 items-center justify-center bg-[#bcbcbc]"><Ico size={8}>{s('M1 1l14 14M15 1 1 15', '#fff', 3.5)}</Ico></button>
              </div>
            </div>
            <nav className="flex flex-1 items-center gap-[25px] overflow-hidden border-t border-[#333] bg-linear-to-b from-[#a0a0a0] to-[#565656] pl-3.5 text-[12px] leading-4 whitespace-nowrap text-white">
              {menus.map((m) => <button key={m}>{m}</button>)}
              <span className="ml-auto flex items-center gap-1.5 pr-1">
                <button aria-label="最小化图形"><Ico size={10}>{f('M0 10h16v4H0z', '#222')}</Ico></button>
                <button aria-label="还原图形"><Ico size={12}>{s('M5 5V1.500h10V10h-4M1 6h10v9H1z', '#222', 2)}</Ico></button>
                <button aria-label="关闭图形"><Ico size={10}>{s('M2 2l12 12M14 2 2 14', '#222', 4)}</Ico></button>
              </span>
            </nav>
          </div>
        </header>

        <div className="flex h-[27px] shrink-0 items-end border-b border-[#555] bg-linear-to-b from-[#a2a2a2] to-[#8e8e8e] pl-[15px]">
          <svg width="14" height="23" viewBox="0 0 14 23" aria-hidden="true"><path d="M0 22C8 21 6 1 13 .500h1V23H0z" fill="#b8b8b8" /><path d="M0 22C8 21 6 1 14 .500" stroke="#e4e4e4" fill="none" /></svg>
          <div className="flex h-[23px] min-w-[109px] items-center justify-between gap-2 border-t border-[#e4e4e4] bg-linear-to-b from-[#c8c8c8] to-[#aaaaaa] pl-[3px] text-[12px]">
            <span className="whitespace-nowrap">{p.tab}</span>
            <button aria-label="关闭选项卡" className="pr-1.5"><Ico size={8}>{s('M1 1l14 14M15 1 1 15', '#808080', 4)}</Ico></button>
          </div>
          <svg width="14" height="23" viewBox="0 0 14 23" aria-hidden="true"><path d="M14 22C6 21 8 1 1 .500H0V23h14z" fill="#b8b8b8" /><path d="M14 22C6 21 8 1 0 .500" stroke="#e4e4e4" fill="none" /></svg>
          <button aria-label="新建选项卡" className="mb-1">
            <svg width="23" height="17" viewBox="0 0 23 17" aria-hidden="true"><path d="M1 1h14c4 0 7 3 7 8v6.500H8C4 15 3 10 1 1z" fill="#8a8a8a" stroke="#555" strokeWidth="1.500" /><path d="M11.500 5v8M7.500 9h8" stroke="#b4b4b4" strokeWidth="3" /></svg>
          </button>
        </div>

        <div className="mt-1 mb-[5px] flex h-6 shrink-0 overflow-hidden border-y border-[#404040] bg-[#e9e9e9] text-[12px] leading-4">
          <div className="flex w-[9px] shrink-0 items-center justify-center bg-[#505050]"><Grip /></div>
          <label className="flex w-[174px] shrink-0 items-center border-r border-[#aaa] bg-linear-to-b from-[#f0f0f0] to-[#dedede] pr-[3px] pl-[9px]">
            <select aria-label="工作空间" className="h-full flex-1 appearance-none bg-transparent outline-none"><option>AutoCAD 经典</option></select>
            <Chevron />
          </label>
          <button aria-label="工作空间设置" className="flex w-6 shrink-0 items-center justify-center"><Ico>{gear}</Ico></button>
          <button aria-label="我的工作空间" className="flex w-[22px] shrink-0 items-center justify-center"><Ico>{s('M1 1.500h15M1 14.500h15M1.500 0v16M14.500 0v16', '#8a8f98', 1.2)}{s('M3.500 13V5.500H6L8.500 3l5 5v5z', '#333', 1, '#8e98a4')}</Ico></button>
          <div className="ml-0.5 flex w-[10px] shrink-0 items-center justify-center border-l-2 border-[#696969] bg-[#505050]"><Grip /></div>
          <button aria-label="图层特性" className="flex w-6 shrink-0 items-center justify-center border-r border-[#aaa]"><Ico>{s('M0 10.500h5L9 6.500H16M0 7h5l4-4h7M6 3.500 8 .500h7l-2 3M0 14h7', '#3b4046', 1.2)}{s('M9 6.500h6v9H9z', '#1b4e9a', 1.2, '#fff')}{f('M11 9h2v1h-2zM11 12h2v1h-2z', '#1b4e9a')}</Ico></button>
          <label className="flex w-[298px] shrink-0 items-center gap-px border-r border-[#aaa] bg-linear-to-b from-[#f0f0f0] to-[#dedede] pr-[3px] pl-px">
            <Ico>{bulb}</Ico>
            <Ico><circle cx="8" cy="8" r="4" fill="#ffe08a" stroke="#a06a20" />{s('M8 0v2M8 14v2M0 8h2M14 8h2M2.500 2.500 4 4M12 12l1.500 1.500M13.500 2.500 12 4M4 12l-1.500 1.500', '#333', 1.2)}</Ico>
            <Ico>{s('M1 1.500h9v8H1zM4 4.500h6v5H4z', '#aaa', 1.3)}<circle cx="11.500" cy="11" r="3.500" fill="#ddd" stroke="#aaa" strokeWidth="2" /></Ico>
            <Ico>{lock}</Ico>
            <span className={`mr-1 h-2.5 w-2.5 border border-black ${p.layerFill}`} />
            <select aria-label="图层" className="h-full flex-1 appearance-none bg-transparent outline-none"><option>{p.layer}</option></select>
            <Chevron />
          </label>
          <button aria-label="置为当前" className="flex w-[23px] shrink-0 items-center justify-center"><Ico>{layers('#3aa0e0')}<circle cx="8" cy="3" r="2.300" fill="#ddd" stroke="#777" /></Ico></button>
          <button aria-label="上一个图层" className="flex w-[23px] shrink-0 items-center justify-center"><Ico>{s('M5 11.500h10l-3 3H3M5 8.500h10l-3 3H4zM7 5.500h8l-2 3H4', '#5a6068', 1.1)}{f('M0 2l3-2v4z')}{s('M2 2h3v3', '#000', 1.3)}</Ico></button>
          <button aria-label="图层状态" className="flex w-[23px] shrink-0 items-center justify-center"><Ico>{s('M1 8.500h6l4-4h4M3 4.500h8l3-4H6zM0 12h6', '#5a6068', 1.2)}{s('M7.500 8.500h8v7h-8z', '#2a4a68', 1.1, '#fff')}{s('M9 11.500h2M12 11.500h2M9 13.500h2M12 13.500h2', '#2a4a68', 1)}</Ico></button>
          <div className="flex w-[11px] shrink-0 items-center justify-center border-l-2 border-[#696969] bg-[#505050]"><Grip /></div>
          <label className={`flex w-[149px] shrink-0 items-center gap-1 border-r border-[#aaa] bg-linear-to-b from-[#f0f0f0] to-[#dedede] pr-[3px] pl-[5px] ${song}`}>
            <span className="h-2.5 w-2.5 border border-black bg-white" />
            <select aria-label="颜色" className="h-full flex-1 appearance-none bg-transparent outline-none"><option>{p.color}</option></select>
            <Chevron />
          </label>
          <span className="mx-[3px] my-0.5 w-px shrink-0 bg-[#777]" />
          <label className={`flex min-w-0 flex-1 items-center gap-1 overflow-hidden border-l border-[#aaa] bg-linear-to-b from-[#f0f0f0] to-[#dedede] pl-[3px] ${song}`}>
            <span className="h-px w-15 shrink-0 bg-black" />
            <select aria-label="线型" className="h-full w-20 shrink-0 appearance-none bg-transparent outline-none"><option>ByLayer</option></select>
          </label>
        </div>

        <div className="flex min-h-0 flex-1 gap-1 pr-[3px] pl-px">
          <div className="flex min-w-0 flex-1 flex-col border-t border-l border-[#8a8a8a]">
            <div className="flex min-h-0 flex-1">
              <div className="relative min-w-0 flex-1 overflow-hidden bg-black">
                <svg className="absolute inset-0 h-full w-full" shapeRendering="crispEdges" aria-label="绘图区">{p.children}</svg>
                <p className="relative pt-1 pl-[3px] text-[12px] leading-[18px] text-[#e4e4e4]">[−][俯视][二维线框]</p>
                <ViewCube />
                <UcsIcon />
              </div>
              <div className="flex w-[19px] shrink-0 flex-col items-center border-r-2 border-white bg-[#efefef] py-1.5">
                <button aria-label="向上滚动" className="rotate-180"><Chevron /></button>
                <div className={`relative w-full flex-1 ${p.thumb}`}>
                  <span className="mx-px block h-[17px] bg-[#cdcdcd]" />
                </div>
                <button aria-label="向下滚动"><Chevron /></button>
              </div>
            </div>
            <div className="flex h-[17px] shrink-0 items-stretch border-t border-b-2 border-t-[#666] border-b-white bg-[#efefef] text-[12px] leading-[14px]">
              {['M2 1h2v14H2zM14 2v12L5 8z', 'M12 2v12L3 8z', 'M4 2v12l9-6z', 'M12 1h2v14h-2zM2 2v12l9-6z'].map((d, i) => (
                <button key={d} aria-label={['首个', '上一个', '下一个', '末个'][i]} className="flex w-3.5 items-center justify-center border-r border-[#999]"><Ico size={11}>{f(d, '#555')}</Ico></button>
              ))}
              <button className="flex w-[46px] items-center justify-center bg-black text-white [clip-path:polygon(0_0,100%_0,88%_100%,14%_100%)]">模型</button>
              <button className={`flex items-center pl-1 ${p.layout === 'Layout1' ? song : ui}`}>{p.layout}</button>
              <svg width="18" height="14" viewBox="0 0 18 14" aria-hidden="true"><path d="M15 0 10 14" stroke="#555" fill="none" /></svg>
              <div className="ml-auto flex w-[35%] items-center border-l-2 border-[#d8d8d8] pr-6 pl-2">
                <button aria-label="向左滚动" className="rotate-90"><Chevron /></button>
                <span className="mr-2.5 ml-auto h-[13px] w-[17px] bg-[#cdcdcd]" />
                <button aria-label="向右滚动" className="-rotate-90"><Chevron /></button>
              </div>
            </div>
          </div>
          <div className="mb-auto flex w-[25px] shrink-0 flex-col border border-[#404040] bg-[#ebebeb]">
            <div className="flex h-[7px] shrink-0 items-center justify-center bg-[#5c5c5c]">
              <svg width="14" height="3" viewBox="0 0 14 3" aria-hidden="true"><path d="M0 .500h14M0 2.500h14" stroke="#111" strokeDasharray="1 1" /></svg>
            </div>
            {railTop.map((art, i) => (
              <button key={i} aria-label={`工具 ${i + 1}`} className="flex h-[22px] shrink-0 items-center justify-center"><Ico>{art}</Ico></button>
            ))}
            <hr className="mx-0.5 mt-0.5 mb-[3px] border-[#aaa]" />
            {rail.map((art, i) => (
              <button key={i} aria-label={`工具 ${i + 6}`} className="flex h-[22px] shrink-0 items-center justify-center"><Ico>{art}</Ico></button>
            ))}
          </div>
        </div>

        <div className="mt-[5px] flex h-[57px] shrink-0">
          <div className="flex w-[23px] shrink-0 flex-col items-center justify-between bg-linear-to-b from-[#8c8c8c] to-[#454545] pt-1 pb-1.5">
            <svg width="17" height="5" viewBox="0 0 17 5" aria-hidden="true"><path d="M0 1h17M0 4h17" stroke="#bbb" strokeWidth="2" strokeDasharray="2 1" /></svg>
            <button aria-label="关闭命令行"><Ico size={10}>{s('M1 2l14 12M15 2 1 14', '#fff', 3)}</Ico></button>
            <button aria-label="自定义"><Ico size={15}>{s('M5 5l9 9', '#fff', 3.5)}{s('M1 4c0 4 3 5 6 3 1-3 0-6-4-6l2 3-2 1z', '#fff', 1, '#fff')}</Ico></button>
          </div>
          <div className="flex min-w-0 flex-1 flex-col border-t border-r border-[#777]">
            <div className="h-[33px] overflow-hidden border-b border-[#777] bg-[#c7c7c7] pl-0.5 text-[13px] leading-[15px] whitespace-pre text-black">
              {p.history.map((h, i) => <CommandText key={i} line={h} />)}
            </div>
            <div className="flex min-h-0 flex-1 items-center gap-1 bg-white pl-[5px]">
              <button aria-label="最近使用的命令" className="flex items-center gap-1">
                <span className="flex h-3.5 w-[15px] items-center justify-center border border-[#8c94a0] bg-[#dde0e6]"><Ico size={11}>{s('M2 3l5 5-5 5M8 13h7', '#445', 2)}</Ico></span>
                <Down color="#888" />
              </button>
              <input aria-label="命令" value={command} onChange={(e) => setCommand(e.target.value)} placeholder="键入命令" className="ml-0.5 h-5 min-w-0 flex-1 text-[13px] outline-none placeholder:text-[#999] placeholder:italic" />
            </div>
          </div>
        </div>

        <footer className={`flex h-[22px] shrink-0 items-stretch overflow-hidden border-t border-black bg-[#757575] text-[12px] text-black ${plain}`}>
          <button className="ml-1 flex w-[81px] shrink-0 items-center gap-2 border-l border-[#4f4f4f] bg-linear-to-b from-[#bfbfbf] to-[#999] pl-px">
            比例 1:100<Down color="#000" />
          </button>
          <output className="flex min-w-0 flex-1 items-center overflow-hidden bg-linear-to-b from-[#989898] to-[#777] pt-0.5 pl-2 whitespace-nowrap">{p.coords}</output>
          {toggles.map((t, i) => (
            <button
              key={t.name}
              aria-label={t.name}
              aria-pressed={modes[i]}
              onClick={() => setModes(modes.map((m, j) => (j === i ? !m : m)))}
              className={`flex w-[22px] shrink-0 items-center justify-center ${modes[i] ? activeTone : statusTone}`}
            >
              <Ico>{t.art}</Ico>
            </button>
          ))}
          <span className="w-3 shrink-0 border-l border-[#4f4f4f]" />
          <button className={`w-[30px] shrink-0 ${statusTone}`}>模型</button>
          <button aria-label="快速查看布局" className={`flex w-[22px] shrink-0 items-center justify-center ${statusTone}`}><Ico>{s('M2.500 1.500h11v10h-11z', '#555', 1.2, '#fff')}{s('M5 4v5h5z', '#333', 1)}{s('M0 15h16', '#444', 2)}</Ico></button>
          <button aria-label="快速查看图形" className={`flex w-[22px] shrink-0 items-center justify-center ${statusTone}`}><Ico>{s('M.500 2.500h7v7h-7zM8.500 2.500h7v7h-7z', '#555', 1.2, '#fff')}{s('M1 12h15M1 15h15', '#444', 1.8)}</Ico></button>
          <span className="w-[17px] shrink-0 border-l border-[#4f4f4f]" />
          <button className={`flex w-[54px] shrink-0 items-center gap-1 pl-0.5 ${statusTone}`}>
            <Ico>{s('M8 1 6 8 1 12v3l7-4 7 4v-3l-5-4z', '#444', 1, '#eee')}</Ico>1:1<Down color="#000" />
          </button>
          {p.tray === 'short' ? (
            <>
              <span className={`flex w-3 shrink-0 items-center overflow-hidden ${statusTone}`}><Ico>{s('M10 1 8 8 3 12v3l7-4', '#444', 1, '#eee')}</Ico></span>
              <div className="flex w-[50px] shrink-0 items-center gap-1 border-t border-[#444] bg-[#8d8d8d] pl-[3px]">
                <button aria-label="注释比例警告"><Ico>{f('M1 1h12v8H1z', '#2468b8')}{s('M3 2h3v3H3zM7 4h4', '#fff', 1.2)}{f('M1 9h12v5H1z', '#f0c030')}{s('M11 7 6 15.500h10z', '#b08000', 1, '#ffe820')}{f('M10.500 9.500h1v3h-1zM10.500 13.500h1v1h-1z')}</Ico></button>
                <button aria-label="隔离对象"><Ico>{bulb}</Ico></button>
              </div>
            </>
          ) : (
            <>
              <button aria-label="注释可见性" className={`flex w-[22px] shrink-0 items-center justify-center ${statusTone}`}><Ico>{s('M8 1 6 8 1 12v3l7-4 5 4', '#444', 1, '#eee')}<circle cx="12.500" cy="8.500" r="2.500" fill="#fff0a0" stroke="#f08018" strokeWidth="1.500" /></Ico></button>
              <button aria-label="自动添加比例" className={`flex w-[22px] shrink-0 items-center justify-center ${statusTone}`}><Ico>{s('M9 2 7 8 2 12v3l7-4 6 4v-2l-5-5zM3 1l5 3', '#777', 1, '#bbb')}</Ico></button>
              <span className="w-1.5 shrink-0 border-l border-[#4f4f4f]" />
              <button aria-label="切换工作空间" className={`flex w-[23px] shrink-0 items-center justify-center ${statusTone}`}><Ico>{gear}</Ico></button>
              <button aria-label="锁定" className={`flex w-[22px] shrink-0 items-center justify-center ${statusTone}`}><Ico>{s('M9 8V4a2.500 2.500 0 0 1 5 0v2', '#333', 1.5)}{s('M1.500 7.500h9v7h-9z', '#333', 1, '#e6e6e6')}{f('M5 9h1.500v4H5z', '#333')}</Ico></button>
              <span className={`flex w-3.5 shrink-0 items-center overflow-hidden ${statusTone}`}><Ico><circle cx="9" cy="8" r="6" fill="#888" stroke="#666" />{s('M6 5l4 4 3-1', '#eee', 1.8)}</Ico></span>
              <div className="flex w-[30px] shrink-0 items-center border-t border-[#444] bg-[#8d8d8d] pl-1"><button aria-label="隔离对象"><Ico>{bulb}</Ico></button></div>
            </>
          )}
          <button aria-label="状态栏菜单" className={`flex w-3 shrink-0 items-center justify-center ${statusTone}`}><Down color="#000" /></button>
          <button aria-label="全屏显示" className={`flex w-[22px] shrink-0 items-center justify-center ${statusTone}`}><Ico>{s('M1.500 1.500h13v13h-13z', '#4a5260', 1, '#f3f3f3')}{f('M1 1h14v4H1z', '#4a5260')}{f('M9 2h1v1H9zM11 2h1v1h-1zM13 2h1v1h-1z', '#fff')}</Ico></button>
          <span className="flex w-4 shrink-0 items-end justify-end border-l border-[#4f4f4f]"><Ico size={12}>{f('M12 1h3v3h-3zM12 6h3v3h-3zM7 6h3v3H7zM12 11h3v3h-3zM7 11h3v3H7zM2 11h3v3H2z', '#dedbcd')}</Ico></span>
        </footer>
      </div>
    </section>
  );
};

export default function App() {
  return (
    <main className={`relative h-screen overflow-hidden bg-[radial-gradient(ellipse_500px_500px_at_0%_0%,#94c8b6_0%,transparent_100%),radial-gradient(ellipse_500px_400px_at_100%_0%,#94ceb4_0%,transparent_100%),radial-gradient(ellipse_300px_500px_at_0%_80%,#e2eae2_0%,transparent_100%),linear-gradient(to_bottom,#acd4c4_0%,#b4dac8_20%,#c8e0d0_80%,#bfdccb_100%)] ${ui}`}>
      <a href="#desktop-file" className="absolute top-[18px] left-px flex w-16 flex-col items-center gap-1.5 text-center text-[12px] leading-[17px] text-white [text-shadow:0_1px_2px_#000]">
        <svg width="45" height="34" viewBox="0 0 45 34" aria-hidden="true">
          <rect width="45" height="34" fill="#000" />
          <rect x="2" y="2" width="40" height="29" fill="#fbfbfb" />
          <path d="M3 2.500h38" stroke="#7aa8d0" />
          <path d="M4 6.500h12M22 6.500h14M4 9.500h9M24 9.500h9M4 13.500h12M22 13.500h10M5 17.500h11M24 17.500h10M5 21.500h9M22 21.500h10" stroke="#aaa" strokeDasharray="3 1" />
        </svg>
        <span className="whitespace-nowrap">CAD教程<br />2014基础</span>
      </a>

      <div className="relative flex h-full gap-12 pr-0.5 pl-[19px]">
        <CadWindow
          className="mt-[63px] mb-5 flex-[944]"
          title="融创奥园北区-1#..."
          titlePad="pr-1"
          tab="融创奥园北区-1#楼 封面目录说明材料*"
          layer="ZDH"
          layerFill="bg-[#ff0000]"
          color="ByBlock"
          layout="Layout1"
          history={['加载天正菜单文件: C:\\program files\\tangent\\thvac9\\sys\\tch.tmn', '屏幕菜单初始关闭,热键<Ctrl +>显示菜单,运行命令<TmnLoad>重新加载菜单']}
          coords="1.862610E+06, 7.449329E+03, 0.00000000"
          thumb="pt-[559px]"
          tray="short"
        >
          <CoverSheet />
          <ListSheet />
          <NotesSheet />
        </CadWindow>
        <CadWindow
          className="mt-[66px] mb-[3px] flex-[904]"
          title="Drawing1.dwg"
          titlePad="pr-3"
          tab="Drawing1*"
          layer="0"
          layerFill="bg-white"
          color="ByLayer"
          layout="布局1"
          history={['指定下一点或 [闭合(C)/放弃(U)]:', '指定下一点或 [闭合(C)/放弃(U)]:']}
          coords="31053, 19210, 0"
          thumb="pt-[147px]"
          tray="long"
        >
          <PolyDrawing />
        </CadWindow>
      </div>

      <div className="absolute inset-x-0 bottom-0 flex h-[3px] gap-0.5 border-t border-[#6d8b94] bg-[#94adb5] pl-[39px]">
        <span className="w-11 bg-[#b4c4c8]" />
        <span className="w-11 bg-[#b4c4c8]" />
        <span className="w-10 bg-[#e8eef0]" />
      </div>
    </main>
  );
}
